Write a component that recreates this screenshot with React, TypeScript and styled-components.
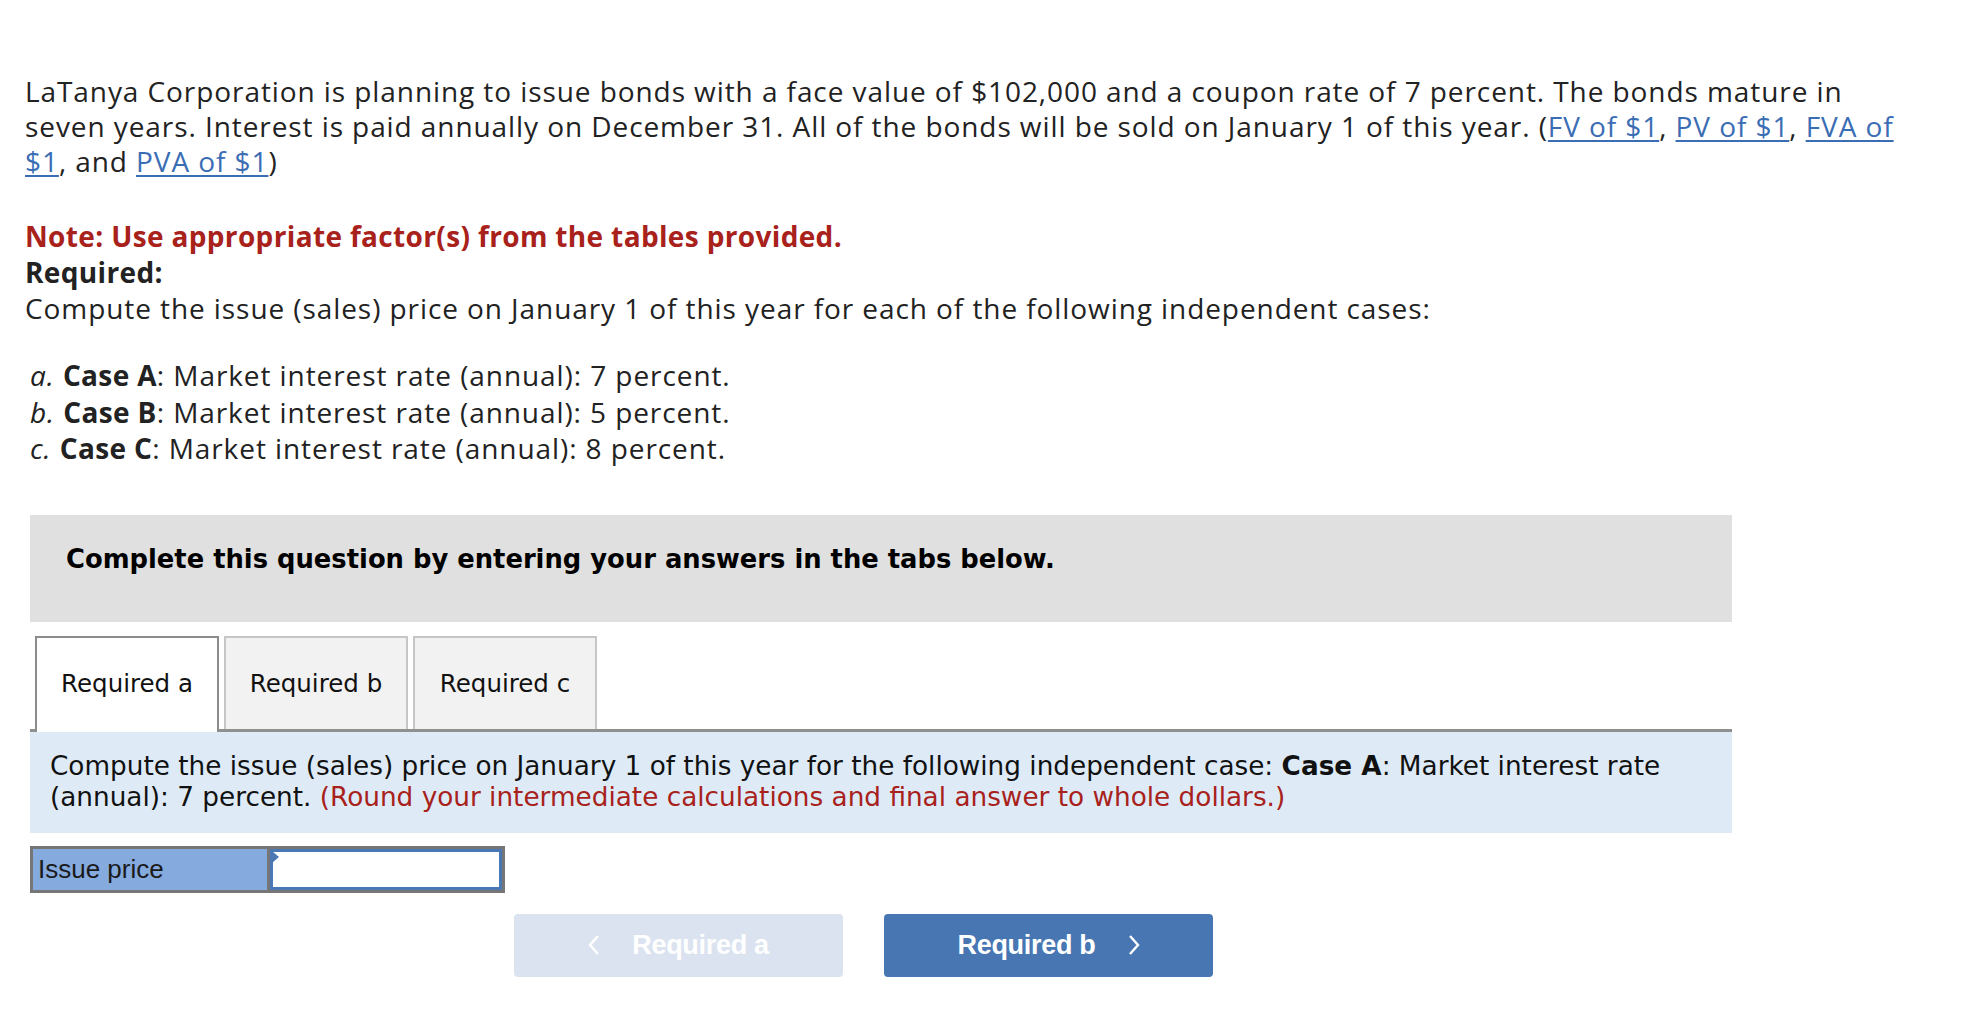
import React from "react";
import styled, { createGlobalStyle } from "styled-components";

const GlobalStyle = createGlobalStyle`
  html, body { margin: 0; padding: 0; background: #ffffff; }
  * { box-sizing: border-box; }
`;

const Page = styled.div`
  padding: 74px 0 40px 25px;
  width: 1964px;
`;

const Prose = styled.div`
  font-family: "Open Sans", Lato, sans-serif;
  font-size: 28px;
  line-height: 35px;
  letter-spacing: 0.92px;
  color: #222222;
  width: 1880px;
  b {
    letter-spacing: 0.35px;
  }
`;

const Intro = styled.p`
  margin: 0 0 39px 0;
`;

const Link = styled.a`
  color: #3b6db4;
  text-decoration: underline;
  text-underline-offset: 3px;
`;

const Line = styled.div<{ $tone?: "note" | "strong" }>`
  line-height: 36px;
  font-weight: ${(p) => (p.$tone ? 700 : 400)};
  letter-spacing: ${(p) => (p.$tone ? "0.35px" : "0.92px")};
  color: ${(p) => (p.$tone === "note" ? "#a8211b" : "#222222")};
`;

const CaseList = styled.div`
  margin: 31px 0 0 5px;
`;

const CaseRow = styled.div`
  line-height: 36.5px;
`;

const Letter = styled.i`
  font-style: italic;
`;

const Shell = styled.div`
  width: 1702px;
  margin: 48px 0 0 5px;
`;

const Banner = styled.div`
  background: #e0e0e0;
  height: 107px;
  padding: 29px 0 0 36px;
  font-family: "DejaVu Sans", Verdana, sans-serif;
  font-weight: 700;
  font-size: 25.8px;
  line-height: 30px;
  color: #000000;
`;

const TabRow = styled.div`
  display: flex;
  gap: 5px;
  padding-left: 5px;
  margin-top: 14px;
  border-bottom: 3px solid #909090;
`;

const Tab = styled.div<{ $active?: boolean }>`
  width: 184px;
  display: flex;
  align-items: center;
  justify-content: center;
  padding-bottom: ${(p) => (p.$active ? "3px" : "0")};
  font-family: "DejaVu Sans", Verdana, sans-serif;
  font-size: 24.5px;
  color: #111111;
  background: ${(p) => (p.$active ? "#ffffff" : "#f2f2f2")};
  border: 2px solid ${(p) => (p.$active ? "#8c8c8c" : "#c6c6c6")};
  border-bottom: none;
  margin-bottom: ${(p) => (p.$active ? "-3px" : "0")};
  height: ${(p) => (p.$active ? "96px" : "93px")};
`;

const Instruction = styled.div`
  background: #deebf7;
  height: 101px;
  padding: 19px 20px 0 20px;
  font-family: "DejaVu Sans", Verdana, sans-serif;
  font-size: 26.3px;
  line-height: 31px;
  color: #111111;
`;

const Hint = styled.span`
  color: #a8211b;
`;

const AnswerRow = styled.div`
  display: flex;
  width: 475px;
  height: 47px;
  margin-top: 13px;
  border: 3px solid #767676;
  background: #767676;
  gap: 3px;
`;

const AnswerLabel = styled.div`
  width: 234px;
  background: #84aade;
  display: flex;
  align-items: center;
  padding-left: 5px;
  font-family: "Liberation Sans", Arial, sans-serif;
  font-size: 26px;
  color: #1a1a1a;
`;

const AnswerInput = styled.div`
  flex: 1;
  background: #ffffff;
  border: 3px solid #4a78b5;
  position: relative;
  &::before {
    content: "";
    position: absolute;
    left: -1px;
    top: -1px;
    border-top: 6px solid transparent;
    border-bottom: 6px solid transparent;
    border-left: 7px solid #4a78b5;
  }
`;

const NavRow = styled.div`
  display: flex;
  gap: 41px;
  padding-left: 484px;
  margin-top: 21px;
`;

const NavButton = styled.div<{ $enabled?: boolean }>`
  width: 329px;
  height: 63px;
  border-radius: 4px;
  background: ${(p) => (p.$enabled ? "#4776b3" : "#dae3ef")};
  color: #ffffff;
  display: flex;
  align-items: center;
  justify-content: center;
  gap: 32px;
  font-family: "Liberation Sans", Arial, sans-serif;
  font-weight: 700;
  font-size: 27px;
  letter-spacing: -0.3px;
`;

const Chevron = ({ dir }: { dir: "left" | "right" }) => (
  <svg width="12" height="22" viewBox="0 0 12 22">
    <path
      d={dir === "left" ? "M10 2 L2 11 L10 20" : "M2 2 L10 11 L2 20"}
      fill="none"
      stroke="#ffffff"
      strokeWidth="2.4"
    />
  </svg>
);

export default function App() {
  return (
    <Page>
      <GlobalStyle />
      <Prose>
        <Intro>
          LaTanya Corporation is planning to issue bonds with a face value of $102,000 and a coupon rate of 7
          percent. The bonds mature in seven years. Interest is paid annually on December 31. All of the bonds will
          be sold on January 1 of this year. (<Link>FV of $1</Link>, <Link>PV of $1</Link>,{" "}
          <Link>FVA of $1</Link>, and <Link>PVA of $1</Link>)
        </Intro>
        <Line $tone="note">Note: Use appropriate factor(s) from the tables provided.</Line>
        <Line $tone="strong">Required:</Line>
        <Line>Compute the issue (sales) price on January 1 of this year for each of the following independent cases:</Line>
        <CaseList>
          <CaseRow>
            <Letter>a.</Letter> <b>Case A</b>: Market interest rate (annual): 7 percent.
          </CaseRow>
          <CaseRow>
            <Letter>b.</Letter> <b>Case B</b>: Market interest rate (annual): 5 percent.
          </CaseRow>
          <CaseRow>
            <Letter>c.</Letter> <b>Case C</b>: Market interest rate (annual): 8 percent.
          </CaseRow>
        </CaseList>
      </Prose>
      <Shell>
        <Banner>Complete this question by entering your answers in the tabs below.</Banner>
        <TabRow>
          <Tab $active>Required a</Tab>
          <Tab>Required b</Tab>
          <Tab>Required c</Tab>
        </TabRow>
        <Instruction>
          Compute the issue (sales) price on January 1 of this year for the following independent case:{" "}
          <b>Case A</b>: Market interest rate (annual): 7 percent.{" "}
          <Hint>(Round your intermediate calculations and final answer to whole dollars.)</Hint>
        </Instruction>
        <AnswerRow>
          <AnswerLabel>Issue price</AnswerLabel>
          <AnswerInput />
        </AnswerRow>
        <NavRow>
          <NavButton>
            <Chevron dir="left" />
            <span>Required a</span>
          </NavButton>
          <NavButton $enabled>
            <span>Required b</span>
            <Chevron dir="right" />
          </NavButton>
        </NavRow>
      </Shell>
    </Page>
  );
}
